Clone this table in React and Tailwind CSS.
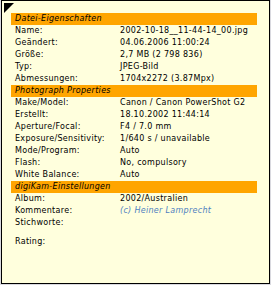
import React from "react";

const sections = [
  {
    title: "Datei-Eigenschaften",
    rows: [
      ["Name:", "2002-10-18__11-44-14_00.jpg"],
      ["Geändert:", "04.06.2006 11:00:24"],
      ["Größe:", "2,7 MB (2 798 836)"],
      ["Typ:", "JPEG-Bild"],
      ["Abmessungen:", "1704x2272 (3.87Mpx)"],
    ],
  },
  {
    title: "Photograph Properties",
    rows: [
      ["Make/Model:", "Canon / Canon PowerShot G2"],
      ["Erstellt:", "18.10.2002 11:44:14"],
      ["Aperture/Focal:", "F4 / 7.0 mm"],
      ["Exposure/Sensitivity:", "1/640 s / unavailable"],
      ["Mode/Program:", "Auto"],
      ["Flash:", "No, compulsory"],
      ["White Balance:", "Auto"],
    ],
  },
  {
    title: "digiKam-Einstellungen",
    rows: [
      ["Album:", "2002/Australien"],
      ["Kommentare:", "(c) Heiner Lamprecht", true],
      ["Stichworte:", ""],
    ],
  },
];

const Row = ({ label, value, comment }) => (
  <div className="flex h-[12px] items-center pl-[4px]">
    <span className="w-[105px] shrink-0">{label}</span>
    <span className={comment ? "italic text-[#4f7fc0]" : ""}>{value}</span>
  </div>
);

export default function App() {
  return (
    <div className="w-[271px] h-[285px] bg-[#d9d9df] overflow-hidden">
      <div
        className="relative ml-[1px] w-[269px] h-[284px] border border-black bg-[#ffffdd] pt-[12px] pl-[9px] pr-[12px] text-[8px] leading-[12px] text-black tracking-[0.3px]"
        style={{ fontFamily: '"DejaVu Sans", Verdana, sans-serif' }}
      >
        <svg className="absolute left-[2px] top-[2px]" width="10" height="10" viewBox="0 0 10 10">
          <polygon points="0,0 10,0 0,10" fill="#000" />
        </svg>
        {sections.map((s) => (
          <div key={s.title}>
            <div className="h-[12px] bg-[#ffa500] pl-[4px] italic flex items-center">{s.title}</div>
            {s.rows.map(([l, v, c]) => (
              <Row key={l} label={l} value={v} comment={c} />
            ))}
          </div>
        ))}
        <div className="mt-[7px]">
          <Row label="Rating:" value="" />
        </div>
      </div>
    </div>
  );
}
